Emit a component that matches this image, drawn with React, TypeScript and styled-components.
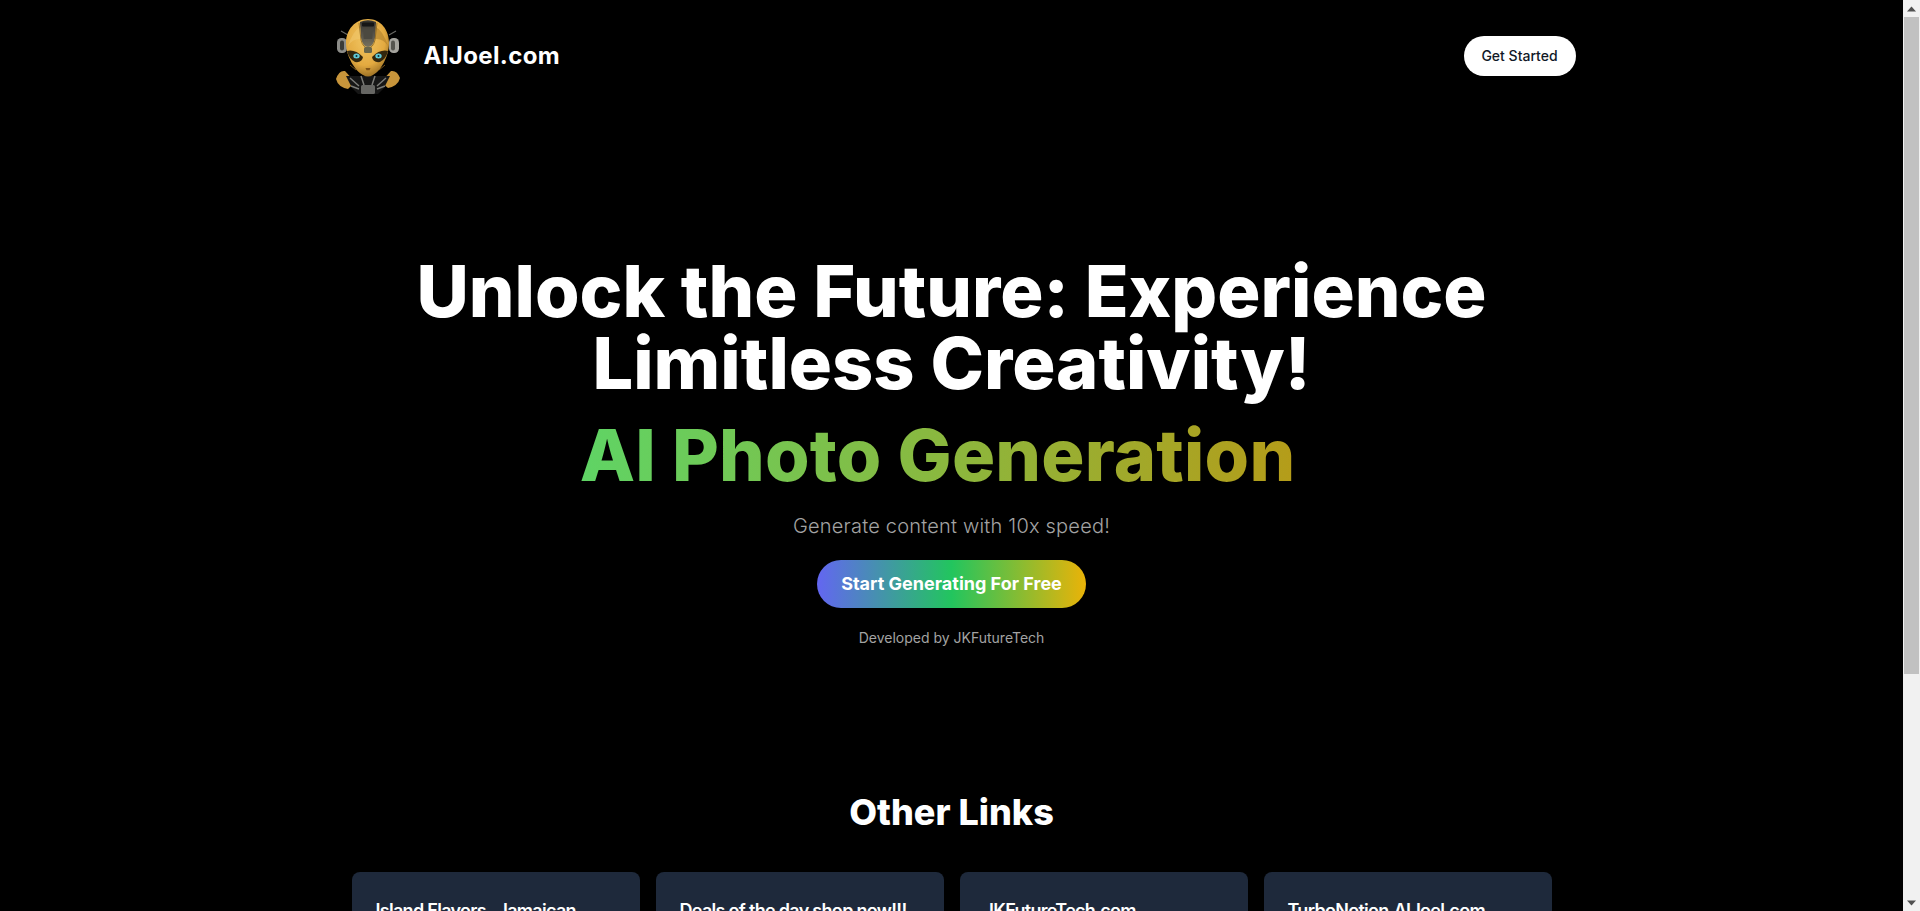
import React from "react";
import styled, { createGlobalStyle } from "styled-components";

const Global = createGlobalStyle`
  html, body { margin: 0; padding: 0; height: 100%; background: #000; overflow: hidden; }
  #root { height: 100%; }
  * { box-sizing: border-box; }
`;

const Shell = styled.div`
  display: flex;
  height: 100vh;
  background: #000;
  font-family: Inter, "Liberation Sans", sans-serif;
  color: #fff;
`;
const Page = styled.main`
  flex: 1;
  min-width: 0;
  overflow: hidden;
`;
const Scrollbar = styled.div`
  width: 17px;
  flex: none;
  display: flex;
  flex-direction: column;
  background: #f1f1f1;
`;
const ScrollArrow = styled.div`
  height: 17px;
  flex: none;
  display: flex;
  align-items: center;
  justify-content: center;
`;
const ScrollThumb = styled.div`
  width: 15px;
  height: 657px;
  margin: 0 auto;
  flex: none;
  background: #c1c1c1;
`;
const ScrollRest = styled.div`
  flex: 1;
`;
const Header = styled.header`
  max-width: 1280px;
  margin: 0 auto;
  padding: 16px 16px 0;
  height: 96px;
  display: flex;
  align-items: center;
  justify-content: space-between;
`;
const Brand = styled.div`
  display: flex;
  align-items: center;
  gap: 16px;
`;
const BrandName = styled.span`
  font-family: Inter, sans-serif;
  font-size: 24px;
  font-weight: 700;
  letter-spacing: 0.35px;
  line-height: 32px;
`;
const HeaderButton = styled.button`
  height: 40px;
  width: 112px;
  border: 0;
  border-radius: 20px;
  background: #fff;
  color: #111827;
  font: 500 14px/20px Inter, sans-serif;
`;
const Hero = styled.section`
  display: flex;
  flex-direction: column;
  align-items: center;
  padding-top: 159px;
  text-align: center;
`;
const Title = styled.h1`
  margin: 0;
  max-width: 1200px;
  font-size: 72px;
  line-height: 72px;
  font-weight: 800;
`;
const GradientLine = styled.h2`
  margin: 20px 0 0;
  padding-right: 28px;
  font-size: 72px;
  line-height: 72px;
  font-weight: 800;
  letter-spacing: 0.2px;
  background: linear-gradient(90deg, #5fd465, #b89a16);
  -webkit-background-clip: text;
  background-clip: text;
  color: transparent;
`;
const Subtitle = styled.p`
  margin: 21px 0 0;
  font-size: 20px;
  line-height: 28px;
  font-weight: 300;
  letter-spacing: 0.2px;
  color: #a3a3a3;
`;
const Cta = styled.button`
  margin-top: 20px;
  height: 48px;
  width: 269px;
  border: 0;
  border-radius: 24px;
  background: linear-gradient(90deg, #6366f1, #22c55e, #eab308);
  color: #fff;
  font: 700 18px/28px Inter, sans-serif;
`;
const Credit = styled.p`
  margin: 20px 0 0;
  font-size: 14px;
  line-height: 20px;
  color: #a3a3a3;
`;
const Links = styled.section`
  max-width: 1200px;
  margin: 0 auto;
  padding-top: 144px;
`;
const LinksTitle = styled.h2`
  margin: 0;
  font-size: 36px;
  line-height: 40px;
  font-weight: 800;
  text-align: center;
`;
const CardGrid = styled.div`
  display: grid;
  grid-template-columns: repeat(4, 1fr);
  gap: 16px;
  margin-top: 40px;
`;
const Card = styled.a`
  display: block;
  padding: 25px 24px 24px;
  border-radius: 8px;
  background: #1e293b;
  color: #fff;
`;
const CardTitle = styled.h3`
  margin: 0;
  font-size: 18px;
  line-height: 28px;
  font-weight: 600;
  letter-spacing: -0.7px;
`;

const RobotLogo = () => (
  <svg width="80" height="80" viewBox="0 0 80 80" aria-hidden="true">
    <defs>
      <radialGradient id="skin" cx="45%" cy="35%" r="70%">
        <stop offset="0" stopColor="#f2c663" />
        <stop offset="0.65" stopColor="#e3aa40" />
        <stop offset="1" stopColor="#8f6620" />
      </radialGradient>
      <linearGradient id="plate" x1="0" y1="0" x2="0" y2="1">
        <stop offset="0" stopColor="#33312e" />
        <stop offset="1" stopColor="#76715f" />
      </linearGradient>
      <filter id="soft"><feGaussianBlur stdDeviation="0.4" /></filter>
    </defs>
    <g filter="url(#soft)">
      <path d="M13 15l7 4M68 15l-7 4" stroke="#6a6a66" strokeWidth="1.1" />
      <rect x="9" y="22" width="10" height="15" rx="4.5" fill="#8d8d89" />
      <rect x="61" y="22" width="10" height="15" rx="4.5" fill="#a5a49e" />
      <rect x="12" y="24.5" width="4" height="10" rx="2" fill="#3a3a38" />
      <rect x="63" y="24.5" width="4" height="10" rx="2" fill="#55544f" />
      <path d="M8 63 Q11 54 17 55 L27 66 L20 73 Q10 71 8 63Z" fill="#c8953a" />
      <path d="M72 62 Q69 54 63 55 L53 66 L60 72 Q70 70 72 62Z" fill="#c8953a" />
      <path d="M18 60 L62 60 L56 72 L50 78 L30 78 L24 72Z" fill="#161615" />
      <path d="M22 62l9 8M58 62l-9 8M23 70l8 3M57 70l-8 3M33 60l3 9M47 60l-3 9" stroke="#7b7b78" strokeWidth="1.5" />
      <rect x="33" y="69" width="14" height="9" rx="1.5" fill="#666664" />
      <path d="M40 3 C53 3 61 14 61 27 C61 40 53 55 45 59 Q40 62 35 59 C27 55 18 40 18 27 C18 14 27 3 40 3Z" fill="url(#skin)" />
      <path d="M20 30 Q25 22 33 23 L34 10 Q25 14 20 30Z" fill="#f0c76c" opacity="0.6" />
      <path d="M60 30 Q55 22 47 23 L46 10 Q55 14 60 30Z" fill="#a97a26" opacity="0.55" />
      <path d="M32 6 Q40 2.5 48 6 L47 22 Q45 31 40 31 Q35 31 33 22Z" fill="url(#plate)" />
      <path d="M31 7 L33 24 Q35 32 40 32 Q45 32 47 24 L49 7" fill="none" stroke="#8a6420" strokeWidth="0.8" />
      <rect x="34" y="6.5" width="12" height="4" rx="1" fill="#171614" />
      <rect x="35.5" y="14" width="9" height="9" rx="1" fill="#4b4841" />
      <rect x="36" y="31" width="8" height="6" rx="1.5" fill="#68654b" />
      <path d="M19 35 Q27 33 35 41 Q34 47 27 46 Q21 43 19 35Z" fill="#33270f" />
      <path d="M60 35 Q52 33 44 41 Q45 47 52 46 Q58 43 60 35Z" fill="#33270f" />
      <ellipse cx="28.5" cy="40" rx="3.2" ry="2.5" fill="#5ec9d6" />
      <ellipse cx="50.5" cy="40" rx="3.2" ry="2.5" fill="#5ec9d6" />
      <circle cx="28.5" cy="40" r="1" fill="#0d2a30" />
      <circle cx="50.5" cy="40" r="1" fill="#0d2a30" />
      <path d="M22 49l6 5M57 49l-6 5" stroke="#93671e" strokeWidth="0.8" />
      <path d="M37.5 52h5l-1 2.2h-3z" fill="#7f5218" />
    </g>
  </svg>
);

const ArrowUp = () => (
  <svg width="9" height="6" viewBox="0 0 9 6"><path d="M4.5 0.5L9 5.5H0Z" fill="#505050" /></svg>
);
const ArrowDown = () => (
  <svg width="9" height="6" viewBox="0 0 9 6"><path d="M0 0.5H9L4.5 5.5Z" fill="#505050" /></svg>
);

const cards = [
  "Island Flavors- Jamaican Restaurant",
  "Deals of the day shop now!!!",
  "JKFutureTech.com",
  "TurboNotion.AIJoel.com",
];

export default function App() {
  return (
    <Shell>
      <Global />
      <Page>
        <Header>
          <Brand>
            <RobotLogo />
            <BrandName>AIJoel.com</BrandName>
          </Brand>
          <HeaderButton>Get Started</HeaderButton>
        </Header>
        <Hero>
          <Title>
            Unlock the Future: Experience
            <br />
            Limitless Creativity!
          </Title>
          <GradientLine>AI Photo Generation</GradientLine>
          <Subtitle>Generate content with 10x speed!</Subtitle>
          <Cta>Start Generating For Free</Cta>
          <Credit>Developed by JKFutureTech</Credit>
        </Hero>
        <Links>
          <LinksTitle>Other Links</LinksTitle>
          <CardGrid>
            {cards.map((c) => (
              <Card key={c}>
                <CardTitle>{c}</CardTitle>
              </Card>
            ))}
          </CardGrid>
        </Links>
      </Page>
      <Scrollbar>
        <ScrollArrow><ArrowUp /></ScrollArrow>
        <ScrollThumb />
        <ScrollRest />
        <ScrollArrow><ArrowDown /></ScrollArrow>
      </Scrollbar>
    </Shell>
  );
}
